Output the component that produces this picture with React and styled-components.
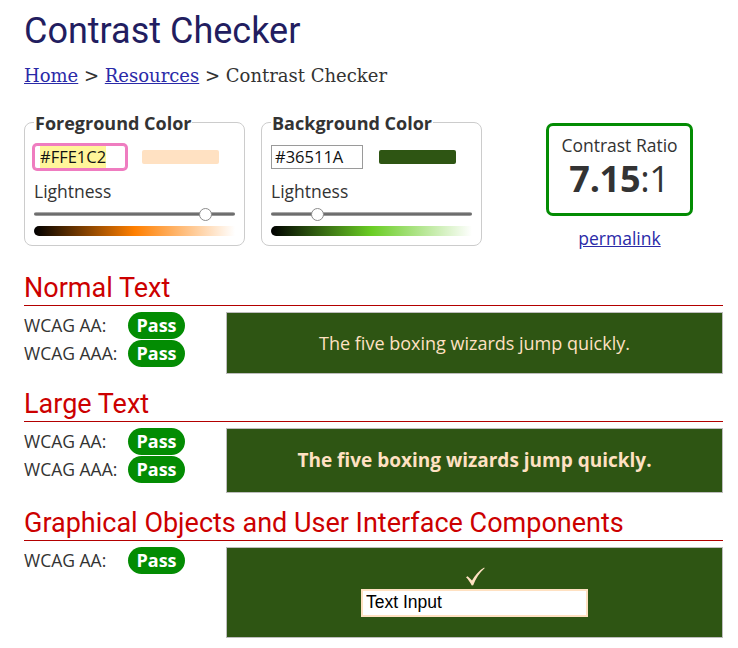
import React, {useEffect, useRef} from 'react';
import styled, {createGlobalStyle} from 'styled-components';

const colors = {
    text: '#333333',
    link: '#2a2aa8',
    title: '#221d60',
    heading: '#cc0000',
    rule: '#b30000',
    pass: '#038c03',
    fg: '#ffe1c2',
    bg: '#2e5513',
    focus: '#ef7cc0',
};

const GlobalStyle = createGlobalStyle`
  body {
    margin: 0;
    background: #fff;
    color: ${colors.text};
    font-family: "Open Sans", "DejaVu Sans", sans-serif;
  }
  ::selection {
    background: #fff59a;
    color: #111;
  }
`;

const Page = styled.main`
  padding: 10px 15px 20px 24px;
`;
const Title = styled.h1`
  margin: 0;
  font-family: Roboto, "Liberation Sans", sans-serif;
  font-weight: 400;
  font-size: 36px;
  line-height: 42px;
  color: ${colors.title};
`;
const Crumbs = styled.nav`
  margin-top: 12.5px;
  font-family: "DejaVu Serif", "Liberation Serif", serif;
  font-size: 18px;
  line-height: 22px;
  color: ${colors.text};

  a {
    color: ${colors.link};
  }
`;

const Controls = styled.div`
  display: flex;
  align-items: flex-start;
  gap: 16px;
  margin-top: 24px;
`;
const Picker = styled.fieldset`
  margin: 0;
  width: 221px;
  box-sizing: border-box;
  padding: 10px 9px 9px;
  border: 1px solid #cccccc;
  border-radius: 8px;
`;
const Legend = styled.legend`
  padding: 0 1px;
  font-weight: 700;
  font-size: 18px;
  line-height: 24px;
  color: ${colors.text};
`;
const ColorRow = styled.div`
  display: flex;
  align-items: center;
  gap: 16px;
`;
const HexInput = styled.input`
  width: 92px;
  height: 24px;
  box-sizing: border-box;
  margin: 0;
  padding: 0 ${p => p.$focused ? '5px' : '3px'};
  border: 1px solid ${p => p.$focused ? colors.focus : '#9a9a9a'};
  border-radius: ${p => p.$focused ? '3px' : '0'};
  box-shadow: ${p => p.$focused ? `0 0 0 2px ${colors.focus}` : 'none'};
  outline: none;
  font-family: "Open Sans", sans-serif;
  font-size: 16.5px;
  color: #111;
  background: #fff;
`;
const Swatch = styled.span`
  width: 77px;
  height: 14px;
  border-radius: 2px;
  background: ${p => p.$color};
`;
const FieldLabel = styled.div`
  margin-top: 10px;
  font-size: 17.5px;
  line-height: 24px;
  color: ${colors.text};
`;
const Slider = styled.div`
  position: relative;
  height: 16px;
  margin-top: 3px;
  display: flex;
  align-items: center;
`;
const Rail = styled.div`
  width: 100%;
  height: 4px;
  border-radius: 2px;
  background: linear-gradient(#c4c4c4, #555 50%, #b0b0b0);
`;
const Thumb = styled.span`
  position: absolute;
  top: 2px;
  width: 11px;
  height: 11px;
  margin-left: -6px;
  border: 1px solid #8c8c8c;
  border-radius: 50%;
  background: #fff;
`;
const Spectrum = styled.div`
  height: 10px;
  margin-top: 4px;
  border-radius: 5px 0 0 5px;
  background: linear-gradient(to right, #000 0%, ${p => p.$hue} 50%, #fff 100%);
`;

const RatioColumn = styled.div`
  width: 147px;
  margin: 12px 0 0 48px;
  text-align: center;
`;
const RatioBox = styled.div`
  border: 3px solid ${colors.pass};
  border-radius: 7px;
  padding: 7px 0 12px;
`;
const RatioLabel = styled.div`
  font-size: 17.5px;
  line-height: 24px;
`;
const RatioValue = styled.div`
  font-size: 36px;
  line-height: 44px;
  letter-spacing: -0.3px;

  b {
    font-weight: 700;
  }
`;
const Permalink = styled.a`
  display: block;
  margin-top: 10px;
  font-size: 17.5px;
  line-height: 24px;
  color: ${colors.link};
`;

const SectionBlock = styled.section`
  margin-top: ${p => p.$first ? '23px' : '15px'};
`;
const Heading = styled.h2`
  margin: 0;
  padding-bottom: 2px;
  border-bottom: 1px solid ${colors.rule};
  font-family: Roboto, "Liberation Sans", sans-serif;
  font-weight: 400;
  font-size: 27px;
  line-height: 30px;
  color: ${colors.heading};
`;
const SectionBody = styled.div`
  display: flex;
  align-items: flex-start;
  margin-top: 6px;
`;
const Results = styled.div`
  display: grid;
  grid-template-columns: 104px 57px;
  row-gap: 1px;
  align-items: center;
`;
const CheckName = styled.span`
  font-size: 17.5px;
  line-height: 24px;
`;
const Badge = styled.span`
  height: 27px;
  border-radius: 14px;
  background: ${colors.pass};
  color: #fff;
  font-weight: 700;
  font-size: 18px;
  line-height: 27px;
  text-align: center;
`;
const Sample = styled.div`
  flex: 1;
  margin-left: 41px;
  padding: ${p => p.$roomy ? '19px' : '18px'} 0 ${p => p.$roomy ? '20px' : '18px'};
  border: 1px solid #bdbdbd;
  background: ${colors.bg};
  color: ${colors.fg};
  display: flex;
  flex-direction: column;
  align-items: center;
  gap: 3px;
`;
const SampleText = styled.p`
  margin: 0;
  font-size: ${p => p.$large ? '19px' : '18px'};
  font-weight: ${p => p.$large ? 700 : 400};
  line-height: ${p => p.$large ? '27px' : '24px'};
`;
const CheckIcon = styled.svg`
  display: block;
  width: 20px;
  height: 19px;
  fill: ${colors.fg};
`;
const DemoInput = styled.input`
  width: 227px;
  height: 28px;
  box-sizing: border-box;
  margin: 0;
  padding: 0 3px;
  border: 2px solid ${colors.fg};
  background: #fff;
  font-family: "Liberation Sans", Arial, sans-serif;
  font-size: 17.5px;
  color: #000;
  outline: none;
`;

const Checkmark = () => (
    <CheckIcon viewBox="0 0 20 19" aria-hidden="true">
        <path d="M1 10.2 L2.6 9.2 C4 10.3 5.4 11.8 7 13.6 C10 8.4 14 3.6 19.2 0.6 L19.6 1.2
                 C14.6 5.4 10.8 11 8.2 18.2 L6.8 18.6 C5.2 15.4 3.4 12.6 1 10.2 Z"/>
    </CheckIcon>
);

const ColorPicker = ({legend, value, swatch, hue, lightness, focused}) => {
    const inputRef = useRef(null);

    useEffect(() => {
        if (focused && inputRef.current) {
            inputRef.current.focus();
            inputRef.current.select();
        }
    }, [focused]);

    return (
        <Picker>
            <Legend>{legend}</Legend>
            <ColorRow>
                <HexInput ref={inputRef} defaultValue={value} $focused={focused} spellCheck={false}/>
                <Swatch $color={swatch}/>
            </ColorRow>
            <FieldLabel>Lightness</FieldLabel>
            <Slider>
                <Rail/>
                <Thumb style={{left: lightness + '%'}}/>
            </Slider>
            <Spectrum $hue={hue}/>
        </Picker>
    );
};

const Section = ({title, checks, first, roomy, children}) => (
    <SectionBlock $first={first}>
        <Heading>{title}</Heading>
        <SectionBody>
            <Results>
                {checks.map(check => (
                    <React.Fragment key={check}>
                        <CheckName>{check}</CheckName>
                        <Badge>Pass</Badge>
                    </React.Fragment>
                ))}
            </Results>
            <Sample $roomy={roomy}>{children}</Sample>
        </SectionBody>
    </SectionBlock>
);

const App = () => {
    return (
        <Page>
            <GlobalStyle/>
            <Title>Contrast Checker</Title>
            <Crumbs>
                <a href="#home">Home</a> &gt; <a href="#resources">Resources</a> &gt; Contrast Checker
            </Crumbs>

            <Controls>
                <ColorPicker legend="Foreground Color" value="#FFE1C2" swatch={colors.fg}
                             hue="#ff7f00" lightness={85} focused/>
                <ColorPicker legend="Background Color" value="#36511A" swatch={colors.bg}
                             hue="#6acd24" lightness={23}/>
                <RatioColumn>
                    <RatioBox>
                        <RatioLabel>Contrast Ratio</RatioLabel>
                        <RatioValue><b>7.15</b>:1</RatioValue>
                    </RatioBox>
                    <Permalink href="#permalink">permalink</Permalink>
                </RatioColumn>
            </Controls>

            <Section first title="Normal Text" checks={['WCAG AA:', 'WCAG AAA:']}>
                <SampleText>The five boxing wizards jump quickly.</SampleText>
            </Section>
            <Section title="Large Text" checks={['WCAG AA:', 'WCAG AAA:']}>
                <SampleText $large>The five boxing wizards jump quickly.</SampleText>
            </Section>
            <Section roomy title="Graphical Objects and User Interface Components" checks={['WCAG AA:']}>
                <Checkmark/>
                <DemoInput defaultValue="Text Input" readOnly/>
            </Section>
        </Page>
    );
};

export default App;
